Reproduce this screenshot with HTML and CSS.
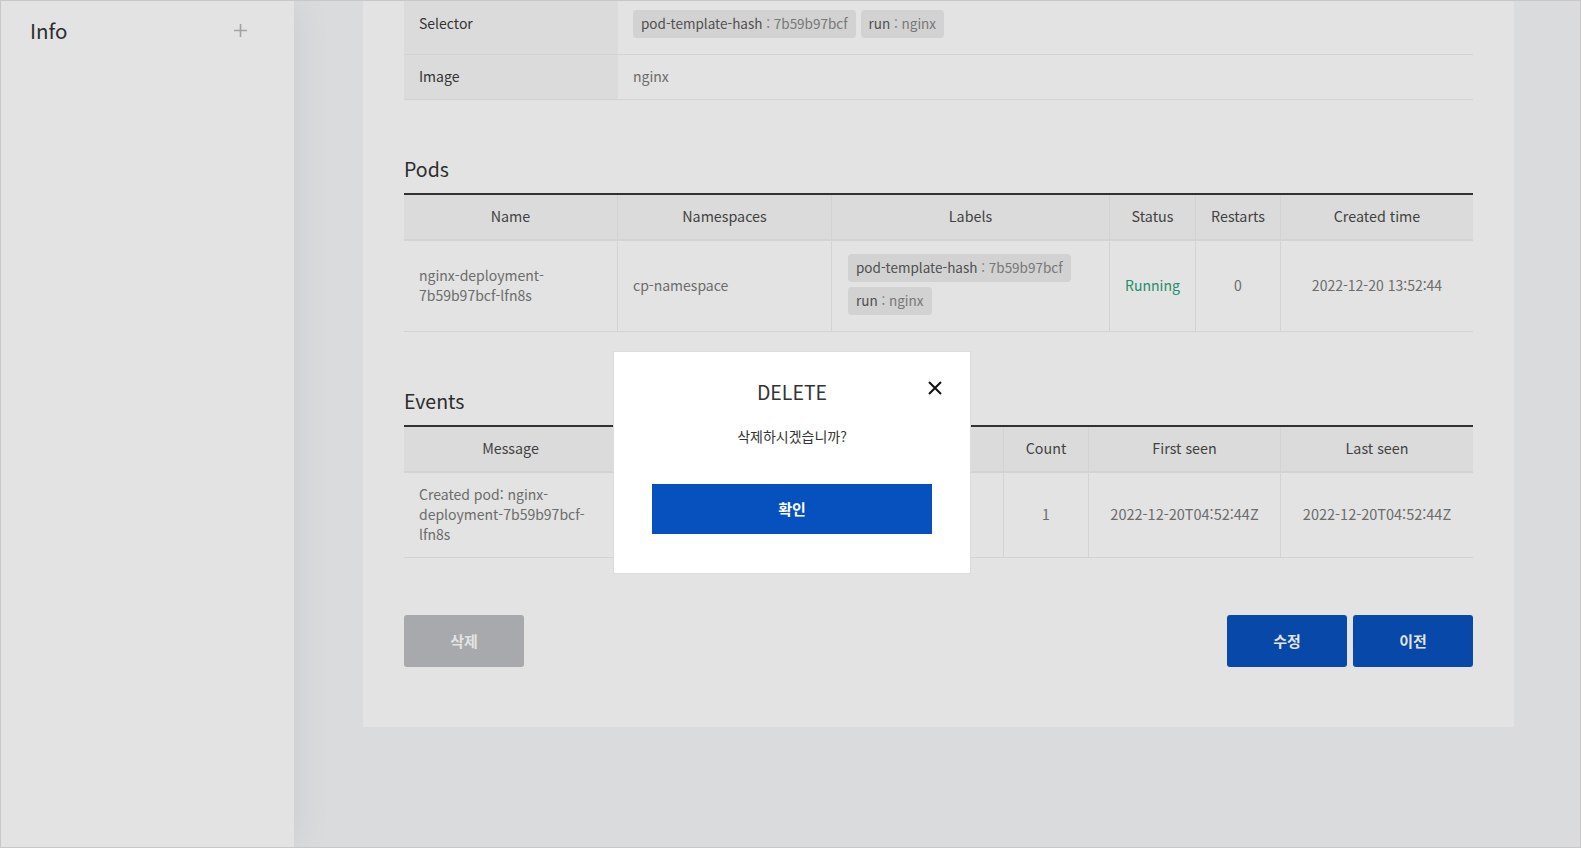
FILE: index.html
```html
<!DOCTYPE html>
<html lang="ko">
<head>
<meta charset="utf-8">
<title>Deployment detail</title>
<link rel="stylesheet" href="styles.css">
</head>
<body>
<div class="app">
  <aside class="sidebar">
    <div class="side-head">
      <span class="side-title">Info</span>
      <svg class="plus" viewBox="0 0 13 13" aria-hidden="true"><path d="M6.5 0V13M0 6.5H13" stroke="#b6b6bb" stroke-width="1.6" fill="none"/></svg>
    </div>
  </aside>
  <main class="main">
    <section class="card">
      <table class="detail">
        <colgroup><col class="col-label"><col></colgroup>
        <tr class="row-selector">
          <th>Selector</th>
          <td>
            <div class="chips">
              <span class="chip"><span class="k">pod-template-hash</span><span class="v"> : 7b59b97bcf</span></span>
              <span class="chip"><span class="k">run</span><span class="v"> : nginx</span></span>
            </div>
          </td>
        </tr>
        <tr class="row-image">
          <th>Image</th>
          <td>nginx</td>
        </tr>
      </table>

      <h3 class="sec-title">Pods</h3>
      <table class="grid">
        <colgroup>
          <col style="width:213px"><col style="width:214px"><col style="width:278px"><col style="width:86px"><col style="width:85px"><col style="width:193px">
        </colgroup>
        <thead>
          <tr><th>Name</th><th>Namespaces</th><th>Labels</th><th>Status</th><th>Restarts</th><th>Created time</th></tr>
        </thead>
        <tbody>
          <tr>
            <td class="left">nginx-deployment-7b59b97bcf-lfn8s</td>
            <td class="left">cp-namespace</td>
            <td class="left labels">
              <div class="chips">
                <span class="chip"><span class="k">pod-template-hash</span><span class="v"> : 7b59b97bcf</span></span>
                <span class="chip"><span class="k">run</span><span class="v"> : nginx</span></span>
              </div>
            </td>
            <td class="running">Running</td>
            <td>0</td>
            <td>2022-12-20 13:52:44</td>
          </tr>
        </tbody>
      </table>

      <h3 class="sec-title">Events</h3>
      <table class="grid">
        <colgroup>
          <col style="width:213px"><col style="width:193px"><col style="width:193px"><col style="width:85px"><col style="width:192px"><col style="width:193px">
        </colgroup>
        <thead>
          <tr><th>Message</th><th>Reason</th><th>Type</th><th>Count</th><th>First seen</th><th>Last seen</th></tr>
        </thead>
        <tbody>
          <tr class="event-row">
            <td class="left">Created pod: nginx-deployment-7b59b97bcf-lfn8s</td>
            <td>SuccessfulCreate</td>
            <td>Normal</td>
            <td>1</td>
            <td class="ts">2022-12-20T04:52:44Z</td>
            <td class="ts">2022-12-20T04:52:44Z</td>
          </tr>
        </tbody>
      </table>

      <div class="actions">
        <button class="btn btn-gray" type="button">삭제</button>
        <div class="btn-group">
          <button class="btn btn-blue" type="button">수정</button>
          <button class="btn btn-blue" type="button">이전</button>
        </div>
      </div>
    </section>
  </main>
</div>

<div class="overlay"></div>
<div class="modal" role="dialog">
  <svg class="close" viewBox="0 0 14 14" aria-hidden="true"><path d="M1 1L13 13M13 1L1 13" stroke="#111" stroke-width="2" fill="none"/></svg>
  <h2 class="modal-title">DELETE</h2>
  <p class="modal-msg">삭제하시겠습니까?</p>
  <button class="confirm" type="button">확인</button>
</div>
</body>
</html>
```

FILE: styles.css
```css
* { box-sizing: border-box; }

body {
  margin: 0;
  font-family: "Noto Sans CJK KR", "Noto Sans", sans-serif;
  color: #333;
}

.app {
  display: flex;
  width: 1581px;
  height: 848px;
  border: 1px solid #e0e0e0;
  overflow: hidden;
  background: #f5f6f9;
}

.sidebar {
  width: 293px;
  flex: none;
  background: #fff;
  position: relative;
  z-index: 1;
  box-shadow: 0 0 40px rgba(0, 0, 0, 0.07);
}

.side-head {
  display: flex;
  justify-content: space-between;
  align-items: center;
  padding: 14px 47px 0 29px;
}

.side-title {
  font-size: 20.5px;
  line-height: 30px;
  color: #333;
}

.plus {
  width: 13px;
  height: 13px;
  display: block;
}

.main {
  flex: 1;
  padding: 0 66px 0 69px;
  overflow: hidden;
}

.card {
  background: #fff;
  margin-top: -9px;
  padding: 0 41px 60px;
}

/* detail table */
.detail {
  width: 100%;
  table-layout: fixed;
  border-collapse: separate;
  border-spacing: 0;
  font-size: 14px;
  line-height: 20px;
}

.col-label { width: 214px; }

.detail th,
.detail td {
  border-bottom: 1px solid #ededed;
  padding: 11px 15px 13px;
  text-align: left;
  font-weight: normal;
}

.detail th {
  background: #f7f7f7;
  color: #3a3a3a;
}

.detail td { color: #7a7a7a; }

.row-selector th { padding: 12px 15px 12px; }
.row-selector td { padding: 18px 15px 16px; }

.chips {
  display: flex;
  flex-wrap: wrap;
  gap: 5px;
}

.chip {
  display: inline-block;
  height: 28px;
  line-height: 26px;
  padding: 0 8px 2px;
  border-radius: 4px;
  background: #ececec;
  font-size: 13.5px;
  white-space: nowrap;
}

.chip .k { color: #5a5a5a; }
.chip .v { color: #878787; }

.sec-title {
  margin: 55px 0 10px;
  font-size: 19.5px;
  line-height: 28px;
  font-weight: normal;
  color: #333;
}

/* grid tables */
.grid {
  width: 100%;
  table-layout: fixed;
  border-collapse: separate;
  border-spacing: 0;
  border-top: 2px solid #393939;
  font-size: 14px;
  line-height: 20px;
}

.grid th {
  background: #f7f7f7;
  font-weight: normal;
  font-size: 14.3px;
  color: #4a4a4a;
  padding: 11px 8px 13px;
  border-bottom: 2px solid #ededed;
  text-align: center;
}

.grid td {
  padding: 11px 15px 13px;
  color: #7a7a7a;
  border-bottom: 1px solid #ededed;
  text-align: center;
  vertical-align: middle;
}

.grid td.ts { font-size: 14.5px; }

.grid th + th,
.grid td + td { border-left: 1px solid #ededed; }

.grid td.left { text-align: left; }

.grid td.labels { padding: 13px 16px 16px; }

.grid td.running { color: #27a07a; }

/* actions */
.actions {
  display: flex;
  justify-content: space-between;
  margin-top: 57px;
}

.btn-group {
  display: flex;
  gap: 6px;
}

.btn {
  width: 120px;
  height: 52px;
  border: 0;
  border-radius: 3px;
  font-family: "Noto Sans CJK KR", "Noto Sans", sans-serif;
  font-size: 15px;
  font-weight: 700;
  color: #fff;
  padding: 0 0 2px;
}

.btn-gray { background: #bdbec3; }
.btn-blue { background: #0851bd; }

/* modal */
.overlay {
  position: fixed;
  inset: 0;
  z-index: 10;
  background: rgba(0, 0, 0, 0.11);
}

.modal {
  position: fixed;
  z-index: 11;
  left: 613px;
  top: 351px;
  width: 358px;
  height: 223px;
  background: #fff;
  border: 1px solid #dcdcdc;
  padding: 25px 38px 0;
  text-align: center;
}

.close {
  position: absolute;
  top: 29px;
  right: 28px;
  width: 14px;
  height: 14px;
}

.modal-title {
  margin: 0;
  font-size: 19.5px;
  line-height: 30px;
  font-weight: normal;
  color: #333;
}

.modal-msg {
  margin: 19px 0 0;
  font-size: 14px;
  line-height: 20px;
  color: #333;
}

.confirm {
  display: block;
  width: 280px;
  height: 50px;
  margin: 38px auto 0;
  border: 0;
  padding: 0 0 2px;
  background: #0751bf;
  color: #fff;
  font-family: "Noto Sans CJK KR", "Noto Sans", sans-serif;
  font-size: 15px;
  font-weight: 700;
}
```
